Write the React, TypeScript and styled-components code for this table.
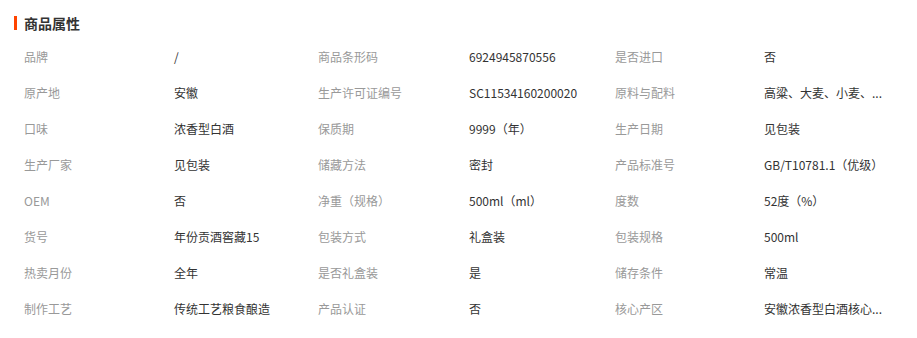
import React from "react";
import styled, { createGlobalStyle } from "styled-components";

const GlobalStyle = createGlobalStyle`
  body {
    margin: 0;
    background: #fff;
    font-family: "Noto Sans CJK SC", "Noto Sans", sans-serif;
  }
`;

// long values are shortened the same way the page shows them
const attrs: [string, string][] = [
    ["品牌", "/"],
    ["商品条形码", "6924945870556"],
    ["是否进口", "否"],
    ["原产地", "安徽"],
    ["生产许可证编号", "SC11534160200020"],
    ["原料与配料", "高粱、大麦、小麦、..."],
    ["口味", "浓香型白酒"],
    ["保质期", "9999（年）"],
    ["生产日期", "见包装"],
    ["生产厂家", "见包装"],
    ["储藏方法", "密封"],
    ["产品标准号", "GB/T10781.1（优级）"],
    ["OEM", "否"],
    ["净重（规格）", "500ml（ml）"],
    ["度数", "52度（%）"],
    ["货号", "年份贡酒窖藏15"],
    ["包装方式", "礼盒装"],
    ["包装规格", "500ml"],
    ["热卖月份", "全年"],
    ["是否礼盒装", "是"],
    ["储存条件", "常温"],
    ["制作工艺", "传统工艺粮食酿造"],
    ["产品认证", "否"],
    ["核心产区", "安徽浓香型白酒核心..."],
];

const App = () => {
    return (
        <Wrapper>
            <GlobalStyle />
            <Title>商品属性</Title>
            <Grid>
                {attrs.map(([label, value]) => (
                    <React.Fragment key={label}>
                        <Label>{label}</Label>
                        <Value>{value}</Value>
                    </React.Fragment>
                ))}
            </Grid>
        </Wrapper>
    );
};

export default App;

const Wrapper = styled.div`
    width: 917px;
    height: 338px;
    padding: 12px 14px 0;
    box-sizing: border-box;
`;

const Title = styled.h3`
    display: flex;
    align-items: center;
    margin: 0;
    height: 22px;
    font-size: 14px;
    font-weight: 700;
    color: #333;
    &::before{
        content: "";
        width: 3px;
        height: 14px;
        margin-right: 7px;
        background: #ff4400;
    }
`;

const Grid = styled.div`
    display: grid;
    grid-template-columns: 150px 144px 151px 146px 149px 140px;
    grid-auto-rows: 36px;
    margin-top: 5px;
    padding-left: 10px;
    font-size: 12px;
    line-height: 36px;
`;

const Label = styled.div`
    color: #999;
    white-space: nowrap;
`;

const Value = styled.div`
    color: #333;
    white-space: nowrap;
`;
